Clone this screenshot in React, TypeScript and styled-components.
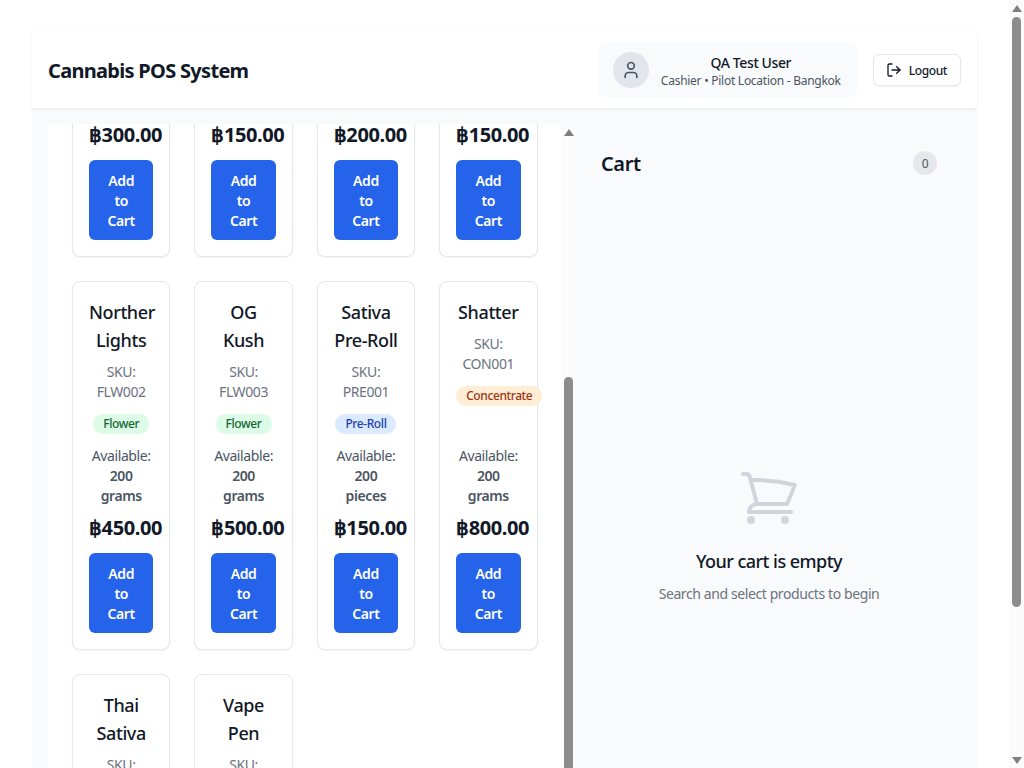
import { useLayoutEffect, useRef } from "react"
import styled, { createGlobalStyle } from "styled-components"
import { LogOut, User } from "lucide-react"

const GlobalStyle = createGlobalStyle`
    * {
        box-sizing: border-box;
    }
    html, body {
        scrollbar-width: none;
    }
    body {
        margin: 0 15px 0 0;
        background: #ffffff;
        color: #111827;
        font-family: "Noto Sans", "Open Sans", sans-serif;
        letter-spacing: -0.025em;
    }
    button {
        letter-spacing: inherit;
    }
`

const Page = styled.div`
    padding: 32px;
`

const Shell = styled.div`
    background: #f9fafb;
`

const Header = styled.header`
    height: 76px;
    padding: 0 16px;
    display: flex;
    align-items: center;
    justify-content: space-between;
    background: #ffffff;
    box-shadow: 0 1px 3px rgba(0, 0, 0, 0.08);
    position: relative;
`

const AppTitle = styled.h1`
    margin: 0;
    padding-top: 2px;
    font-size: 20px;
    line-height: 28px;
    font-weight: 700;
    letter-spacing: -0.035em;
`

const HeaderActions = styled.div`
    display: flex;
    align-items: center;
    gap: 16px;
`

const UserCard = styled.div`
    display: flex;
    align-items: center;
    gap: 12px;
    padding: 8px 16px 8px 15px;
    background: #f9fafb;
    border-radius: 8px;
`

const Avatar = styled.div`
    width: 36px;
    height: 36px;
    border-radius: 50%;
    background: #e2e6ec;
    color: #4b5563;
    display: flex;
    align-items: center;
    justify-content: center;
`

const UserText = styled.div`
    margin-top: 2px;
    text-align: center;
`

const UserName = styled.div`
    font-size: 14px;
    line-height: 20px;
    font-weight: 500;
`

const UserRole = styled.div`
    font-size: 12px;
    line-height: 16px;
    color: #4b5563;
    letter-spacing: -0.022em;
`

const LogoutButton = styled.button`
    display: flex;
    align-items: center;
    gap: 7px;
    height: 32px;
    padding: 0 13px 0 12px;
    background: #ffffff;
    border: 1px solid #e5e7eb;
    border-radius: 6px;
    box-shadow: 0 1px 2px rgba(0, 0, 0, 0.05);
    color: #111827;
    font-family: inherit;
    font-size: 12px;
    font-weight: 500;
`

const Main = styled.main`
    display: flex;
    padding: 16px 0 0 16px;
    height: 830px;
`

const ProductColumn = styled.section`
    width: 528px;
    flex-shrink: 0;
    display: flex;
`

const ProductScroller = styled.div`
    flex: 1;
    min-width: 0;
    overflow-y: scroll;
    scrollbar-width: none;
    background: #ffffff;
    padding: 24px 23.5px 24px 24px;
`

const ProductGrid = styled.div`
    display: grid;
    grid-template-columns: repeat(4, minmax(0, 1fr));
    gap: 24px;
`

const Card = styled.article`
    display: flex;
    flex-direction: column;
    padding: 16px;
    background: #ffffff;
    border: 1px solid #e5e7eb;
    border-radius: 8px;
    box-shadow: 0 1px 2px rgba(0, 0, 0, 0.05);
    text-align: center;
`

const CardTop = styled.div`
    flex: 1;
`

const ProductName = styled.h3`
    margin: 0 0 8px;
    font-size: 18px;
    line-height: 28px;
    font-weight: 500;
`

const Sku = styled.p`
    margin: 0 0 9px;
    font-size: 14px;
    line-height: 20px;
    color: #6b7280;
`

const categoryColors = {
    Flower: { bg: "#dcfce7", fg: "#166534" },
    "Pre-Roll": { bg: "#dbeafe", fg: "#1e40af" },
    Concentrate: { bg: "#ffedd5", fg: "#9a3412" },
    Edible: { bg: "#f3e8ff", fg: "#6b21a8" },
}

type Category = keyof typeof categoryColors

const Badge = styled.span<{ $category: Category }>`
    display: inline-block;
    padding: 2px 10px;
    border-radius: 999px;
    font-size: 12px;
    line-height: 16px;
    font-weight: 500;
    white-space: nowrap;
    background: ${p => categoryColors[p.$category].bg};
    color: ${p => categoryColors[p.$category].fg};
`

const Stock = styled.p`
    margin: 12px 0 8px;
    font-size: 14px;
    line-height: 20px;
    color: #4b5563;
`

const StockAmount = styled.span`
    font-weight: 600;
`

const Price = styled.div`
    margin-bottom: 11px;
    font-size: 20px;
    line-height: 28px;
    font-weight: 700;
    letter-spacing: -0.02em;
    white-space: nowrap;
`

const AddButton = styled.button`
    width: 100%;
    padding: 11px 16px 9px;
    border: none;
    border-radius: 6px;
    background: #2563eb;
    color: #ffffff;
    font-family: inherit;
    font-size: 14px;
    line-height: 20px;
    font-weight: 600;
`

const CartPanel = styled.aside`
    flex: 1;
    display: flex;
    flex-direction: column;
    padding: 24px 40px 0 25px;
`

const CartHeader = styled.div`
    display: flex;
    align-items: center;
    justify-content: space-between;
`

const CartTitle = styled.h2`
    margin: 0;
    padding-top: 2px;
    font-size: 20px;
    line-height: 28px;
    font-weight: 600;
`

const CountBadge = styled.span`
    width: 24px;
    height: 24px;
    border-radius: 50%;
    background: #e5e7eb;
    color: #4b5563;
    font-size: 12px;
    display: flex;
    align-items: center;
    justify-content: center;
`

const EmptyCart = styled.div`
    margin-top: 288px;
    display: flex;
    flex-direction: column;
    align-items: center;
    text-align: center;
`

const EmptyTitle = styled.h3`
    margin: 17px 0 9px;
    font-size: 18px;
    line-height: 28px;
    font-weight: 500;
    letter-spacing: -0.03em;
`

const EmptyHint = styled.p`
    margin: 0;
    font-size: 14px;
    line-height: 20px;
    color: #6b7280;
`

// the browser that takes the picture hides native scrollbars, so they are drawn
const ScrollbarRail = styled.div`
    width: 15px;
    flex-shrink: 0;
    display: flex;
    flex-direction: column;
    background: #fbfbfb;
`

const PageScrollbar = styled(ScrollbarRail)`
    position: fixed;
    top: 0;
    right: 0;
    bottom: 0;
`

const ScrollArrow = styled.div<{ $down?: boolean }>`
    height: 16px;
    flex-shrink: 0;
    display: flex;
    align-items: center;
    justify-content: center;
    &::before {
        content: "";
        border-left: 5px solid transparent;
        border-right: 5px solid transparent;
        border-${p => (p.$down ? "top" : "bottom")}: 7px solid #7f7f7f;
    }
`

const ScrollTrack = styled.div`
    flex: 1;
    min-height: 0;
    padding: 0 3px;
`

const ScrollThumb = styled.div<{ $top: number; $height: number }>`
    margin-top: ${p => p.$top}px;
    height: ${p => p.$height}px;
    background: #8c8c8c;
    border-radius: 5px;
`

const CartIcon = () => (
    <svg width="64" height="64" viewBox="0 0 24 24" fill="none" stroke="#d1d5db" strokeWidth="1.5" strokeLinecap="round" strokeLinejoin="round">
        <path d="M2.25 3h1.386c.51 0 .955.343 1.087.835l.383 1.437M7.5 14.25a3 3 0 0 0-3 3h15.75m-12.75-3h11.218c1.121-2.3 2.1-4.684 2.924-7.138a60.114 60.114 0 0 0-16.536-1.84M7.5 14.25 5.106 5.272M6 20.25a.75.75 0 1 1-1.5 0 .75.75 0 0 1 1.5 0Zm12.75 0a.75.75 0 1 1-1.5 0 .75.75 0 0 1 1.5 0Z" />
    </svg>
)

type Product = {
    name: string
    sku: string
    category: Category
    unit: string
    price: string
}

const products: Product[] = [
    { name: "Blue Dream", sku: "FLW001", category: "Flower", unit: "grams", price: "300.00" },
    { name: "CBD Gummies", sku: "EDB001", category: "Edible", unit: "pieces", price: "150.00" },
    { name: "Hybrid Pre-Roll", sku: "PRE002", category: "Pre-Roll", unit: "pieces", price: "200.00" },
    { name: "Indica Pre-Roll", sku: "PRE003", category: "Pre-Roll", unit: "pieces", price: "150.00" },
    { name: "Norther Lights", sku: "FLW002", category: "Flower", unit: "grams", price: "450.00" },
    { name: "OG Kush", sku: "FLW003", category: "Flower", unit: "grams", price: "500.00" },
    { name: "Sativa Pre-Roll", sku: "PRE001", category: "Pre-Roll", unit: "pieces", price: "150.00" },
    { name: "Shatter", sku: "CON001", category: "Concentrate", unit: "grams", price: "800.00" },
    { name: "Thai Sativa", sku: "FLW004", category: "Flower", unit: "grams", price: "400.00" },
    { name: "Vape Pen", sku: "CON002", category: "Concentrate", unit: "pieces", price: "900.00" },
]

const ProductCard = ({ product }: { product: Product }) => (
    <Card>
        <CardTop>
            <ProductName>{product.name}</ProductName>
            <Sku>SKU: {product.sku}</Sku>
            <Badge $category={product.category}>{product.category}</Badge>
        </CardTop>
        <Stock>Available: <StockAmount>200 {product.unit}</StockAmount></Stock>
        <Price>฿{product.price}</Price>
        <AddButton>Add to Cart</AddButton>
    </Card>
)

export default function App() {
    const scrollerRef = useRef<HTMLDivElement>(null)

    useLayoutEffect(() => {
        if (scrollerRef.current) scrollerRef.current.scrollTop = 260
    }, [])

    return <Page>
        <GlobalStyle />
        <Shell>
            <Header>
                <AppTitle>Cannabis POS System</AppTitle>
                <HeaderActions>
                    <UserCard>
                        <Avatar><User size={20} /></Avatar>
                        <UserText>
                            <UserName>QA Test User</UserName>
                            <UserRole>Cashier • Pilot Location - Bangkok</UserRole>
                        </UserText>
                    </UserCard>
                    <LogoutButton><LogOut size={16} />Logout</LogoutButton>
                </HeaderActions>
            </Header>
            <Main>
                <ProductColumn>
                    <ProductScroller ref={scrollerRef}>
                        <ProductGrid>
                            {products.map(p => <ProductCard key={p.sku} product={p} />)}
                        </ProductGrid>
                    </ProductScroller>
                    <ScrollbarRail>
                        <ScrollArrow />
                        <ScrollTrack><ScrollThumb $top={237} $height={470} /></ScrollTrack>
                        <ScrollArrow $down />
                    </ScrollbarRail>
                </ProductColumn>
                <CartPanel>
                    <CartHeader>
                        <CartTitle>Cart</CartTitle>
                        <CountBadge>0</CountBadge>
                    </CartHeader>
                    <EmptyCart>
                        <CartIcon />
                        <EmptyTitle>Your cart is empty</EmptyTitle>
                        <EmptyHint>Search and select products to begin</EmptyHint>
                    </EmptyCart>
                </CartPanel>
            </Main>
        </Shell>
        <PageScrollbar>
            <ScrollArrow />
            <ScrollTrack><ScrollThumb $top={1} $height={590} /></ScrollTrack>
            <ScrollArrow $down />
        </PageScrollbar>
    </Page>
}
